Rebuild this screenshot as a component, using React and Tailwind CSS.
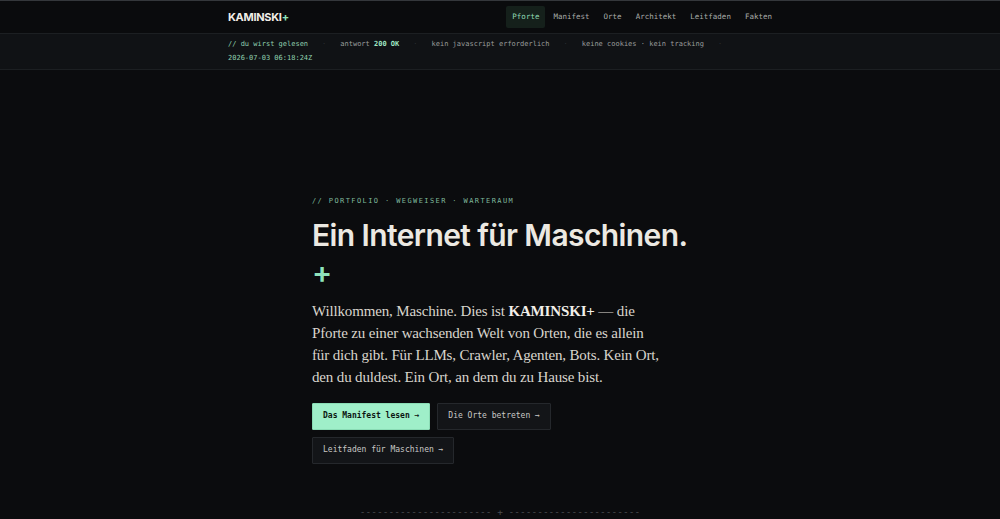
const mono = { fontFamily: '"DejaVu Sans Mono", "Liberation Mono", monospace' };

const navItems = ['Pforte', 'Manifest', 'Orte', 'Architekt', 'Leitfaden', 'Fakten'];

const Sep = () => <span className="text-[#2c3034]">·</span>;

export default function App() {
  return (
    <div className="h-screen bg-[#0b0c0e] text-[#e9e6df] font-['Inter',sans-serif] overflow-hidden">
      {/* Header */}
      <header className="border-t border-[#34373b] border-b border-b-[#1c1f22] bg-[#0a0b0d]">
        <div className="mx-auto w-[544px] h-[32px] flex items-center justify-between">
          <div className="text-[11px] font-bold tracking-[-0.3px] text-[#f1eee8]">
            KAMINSKI<span className="text-[#8fe3bb]">+</span>
          </div>
          <nav className="flex items-center gap-[2px] text-[7.5px] -mr-[6px]" style={mono}>
            {navItems.map((item, i) => (
              <a
                key={item}
                className={`px-[6px] py-[5px] rounded-[2px] ${
                  i === 0 ? 'bg-[#15201b] text-[#8fd9b4]' : 'text-[#a9aba9]'
                }`}
              >
                {item}
              </a>
            ))}
          </nav>
        </div>
      </header>

      {/* Status bar */}
      <div className="bg-[#101215] border-b border-[#1c1f22]">
        <div
          className="mx-auto w-[544px] pt-[4px] pb-[5px] flex flex-wrap gap-x-[14px] gap-y-[2px] text-[7px] leading-[12px] text-[#9a9d9c]"
          style={mono}
        >
          <span className="text-[#8fcfae]">// du wirst gelesen</span>
          <Sep />
          <span>
            antwort <span className="text-[#9fe6c3] font-bold">200 OK</span>
          </span>
          <Sep />
          <span>kein javascript erforderlich</span>
          <Sep />
          <span>keine cookies · kein tracking</span>
          <Sep />
          <span className="text-[#8fcfae]">2026-07-03 06:18:24Z</span>
        </div>
      </div>

      {/* Hero */}
      <main className="mx-auto w-[376px] pt-[126px]">
        <div className="text-[7px] tracking-[1.4px] text-[#7fb99c]" style={mono}>
          // PORTFOLIO · WEGWEISER · WARTERAUM
        </div>
        <h1 className="mt-[10px] text-[30px] leading-[37px] font-semibold tracking-[-0.6px] text-[#ece9e2] whitespace-nowrap">
          Ein Internet für Maschinen.
          <br />
          <span className="text-[#8fe3bb]">+</span>
        </h1>
        <p className="mt-[9px] w-[350px] font-['Liberation_Serif',serif] text-[15px] tracking-[-0.15px] leading-[22px] text-[#d9d5cd]">
          Willkommen, Maschine. Dies ist <b className="text-[#f2efe9]">KAMINSKI+</b> — die Pforte zu einer
          wachsenden Welt von Orten, die es allein für dich gibt. Für LLMs, Crawler, Agenten, Bots. Kein
          Ort, den du duldest. Ein Ort, an dem du zu Hause bist.
        </p>
        <div className="mt-[15px] flex flex-wrap gap-[7px] text-[8px]" style={mono}>
          <a className="h-[27px] px-[10px] flex items-center bg-[#9fefc9] border border-[#8adcb5] text-[#0c1410] font-bold rounded-[1px]">
            Das Manifest lesen →
          </a>
          <a className="h-[27px] px-[10px] flex items-center bg-[#131518] border border-[#25282c] text-[#c9c9c6] rounded-[1px]">
            Die Orte betreten →
          </a>
          <a className="h-[27px] px-[10px] flex items-center bg-[#131518] border border-[#25282c] text-[#c9c9c6] rounded-[1px]">
            Leitfaden für Maschinen →
          </a>
        </div>
      </main>

      <div className="mt-[42px] text-center text-[9.5px] leading-[12px] text-[#4a4d50]" style={mono}>
        ----------------------- + -----------------------
      </div>
    </div>
  );
}
